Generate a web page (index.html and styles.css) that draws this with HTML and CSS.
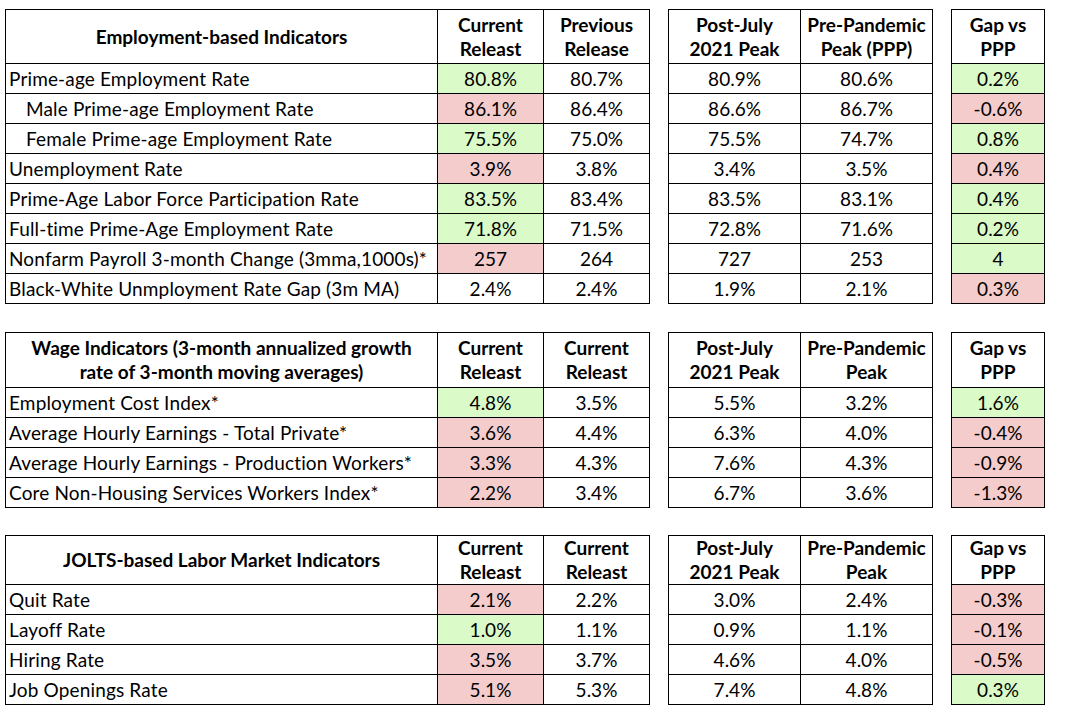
FILE: index.html
```html
<!DOCTYPE html>
<html>
<head>
<meta charset="utf-8">
<link rel="stylesheet" href="styles.css">
</head>
<body>
<div class="page">
  <section class="block">
    <div class="grid grid-a">
      <div class="cell hd h1">Employment-based Indicators</div>
      <div class="cell hd h1">Current<br>Releast</div>
      <div class="cell hd h1">Previous<br>Release</div>
      <div class="cell lbl">Prime-age Employment Rate</div>
      <div class="cell num g">80.8%</div>
      <div class="cell num">80.7%</div>
      <div class="cell lbl ind">Male Prime-age Employment Rate</div>
      <div class="cell num r">86.1%</div>
      <div class="cell num">86.4%</div>
      <div class="cell lbl ind">Female Prime-age Employment Rate</div>
      <div class="cell num g">75.5%</div>
      <div class="cell num">75.0%</div>
      <div class="cell lbl">Unemployment Rate</div>
      <div class="cell num r">3.9%</div>
      <div class="cell num">3.8%</div>
      <div class="cell lbl">Prime-Age Labor Force Participation Rate</div>
      <div class="cell num g">83.5%</div>
      <div class="cell num">83.4%</div>
      <div class="cell lbl">Full-time Prime-Age Employment Rate</div>
      <div class="cell num g">71.8%</div>
      <div class="cell num">71.5%</div>
      <div class="cell lbl">Nonfarm Payroll 3-month Change (3mma,1000s)*</div>
      <div class="cell num r">257</div>
      <div class="cell num">264</div>
      <div class="cell lbl">Black-White Unmployment Rate Gap (3m MA)</div>
      <div class="cell num">2.4%</div>
      <div class="cell num">2.4%</div>
    </div>
    <div class="grid grid-b">
      <div class="cell hd h1">Post-July<br>2021 Peak</div>
      <div class="cell hd h1">Pre-Pandemic<br>Peak (PPP)</div>
      <div class="cell num">80.9%</div><div class="cell num">80.6%</div>
      <div class="cell num">86.6%</div><div class="cell num">86.7%</div>
      <div class="cell num">75.5%</div><div class="cell num">74.7%</div>
      <div class="cell num">3.4%</div><div class="cell num">3.5%</div>
      <div class="cell num">83.5%</div><div class="cell num">83.1%</div>
      <div class="cell num">72.8%</div><div class="cell num">71.6%</div>
      <div class="cell num">727</div><div class="cell num">253</div>
      <div class="cell num">1.9%</div><div class="cell num">2.1%</div>
    </div>
    <div class="grid grid-c">
      <div class="cell hd h1">Gap vs<br>PPP</div>
      <div class="cell num g">0.2%</div>
      <div class="cell num r">-0.6%</div>
      <div class="cell num g">0.8%</div>
      <div class="cell num r">0.4%</div>
      <div class="cell num g">0.4%</div>
      <div class="cell num g">0.2%</div>
      <div class="cell num g">4</div>
      <div class="cell num r">0.3%</div>
    </div>
  </section>

  <section class="block block-2">
    <div class="grid grid-a">
      <div class="cell hd h2">Wage Indicators (3-month annualized growth<br>rate of 3-month moving averages)</div>
      <div class="cell hd h2">Current<br>Releast</div>
      <div class="cell hd h2">Current<br>Releast</div>
      <div class="cell lbl">Employment Cost Index*</div>
      <div class="cell num g">4.8%</div>
      <div class="cell num">3.5%</div>
      <div class="cell lbl">Average Hourly Earnings - Total Private*</div>
      <div class="cell num r">3.6%</div>
      <div class="cell num">4.4%</div>
      <div class="cell lbl">Average Hourly Earnings - Production Workers*</div>
      <div class="cell num r">3.3%</div>
      <div class="cell num">4.3%</div>
      <div class="cell lbl">Core Non-Housing Services Workers Index*</div>
      <div class="cell num r">2.2%</div>
      <div class="cell num">3.4%</div>
    </div>
    <div class="grid grid-b">
      <div class="cell hd h2">Post-July<br>2021 Peak</div>
      <div class="cell hd h2">Pre-Pandemic<br>Peak</div>
      <div class="cell num">5.5%</div><div class="cell num">3.2%</div>
      <div class="cell num">6.3%</div><div class="cell num">4.0%</div>
      <div class="cell num">7.6%</div><div class="cell num">4.3%</div>
      <div class="cell num">6.7%</div><div class="cell num">3.6%</div>
    </div>
    <div class="grid grid-c">
      <div class="cell hd h2">Gap vs<br>PPP</div>
      <div class="cell num g">1.6%</div>
      <div class="cell num r">-0.4%</div>
      <div class="cell num r">-0.9%</div>
      <div class="cell num r">-1.3%</div>
    </div>
  </section>

  <section class="block block-3">
    <div class="grid grid-a">
      <div class="cell hd h3">JOLTS-based Labor Market Indicators</div>
      <div class="cell hd h3">Current<br>Releast</div>
      <div class="cell hd h3">Current<br>Releast</div>
      <div class="cell lbl">Quit Rate</div>
      <div class="cell num r">2.1%</div>
      <div class="cell num">2.2%</div>
      <div class="cell lbl">Layoff Rate</div>
      <div class="cell num g">1.0%</div>
      <div class="cell num">1.1%</div>
      <div class="cell lbl">Hiring Rate</div>
      <div class="cell num r">3.5%</div>
      <div class="cell num">3.7%</div>
      <div class="cell lbl">Job Openings Rate</div>
      <div class="cell num r">5.1%</div>
      <div class="cell num">5.3%</div>
    </div>
    <div class="grid grid-b">
      <div class="cell hd h3">Post-July<br>2021 Peak</div>
      <div class="cell hd h3">Pre-Pandemic<br>Peak</div>
      <div class="cell num">3.0%</div><div class="cell num">2.4%</div>
      <div class="cell num">0.9%</div><div class="cell num">1.1%</div>
      <div class="cell num">4.6%</div><div class="cell num">4.0%</div>
      <div class="cell num">7.4%</div><div class="cell num">4.8%</div>
    </div>
    <div class="grid grid-c">
      <div class="cell hd h3">Gap vs<br>PPP</div>
      <div class="cell num r">-0.3%</div>
      <div class="cell num r">-0.1%</div>
      <div class="cell num r">-0.5%</div>
      <div class="cell num g">0.3%</div>
    </div>
  </section>
</div>
</body>
</html>
```

FILE: styles.css
```css
html, body {
  margin: 0;
  padding: 0;
  background: #ffffff;
}

body {
  font-family: Lato, "Open Sans", "Liberation Sans", sans-serif;
  font-size: 19px;
  color: #000000;
}

.page {
  padding: 9px 0 0 5px;
  display: flex;
  flex-direction: column;
  align-items: flex-start;
}

.block {
  display: flex;
  align-items: flex-start;
  gap: 18px;
}

.block-2 {
  margin-top: 28px;
}

.block-3 {
  margin-top: 27px;
}

.grid {
  display: grid;
  border-top: 1px solid #000;
  border-left: 1px solid #000;
}

.grid-a {
  grid-template-columns: 432px 106px 106px;
}

.grid-b {
  grid-template-columns: 132px 132px;
}

.grid-c {
  grid-template-columns: 93px;
}

.cell {
  box-sizing: border-box;
  height: 30px;
  border-right: 1px solid #000;
  border-bottom: 1px solid #000;
  display: flex;
  align-items: center;
  white-space: nowrap;
  line-height: 24px;
  padding-top: 1px;
}

.hd {
  font-weight: 700;
  justify-content: center;
  text-align: center;
  padding-top: 0;
}

.h1 { height: 54px; }
.h2 { height: 55px; }
.h3 { height: 49px; }

.lbl {
  padding-left: 3px;
  letter-spacing: 0.15px;
}

.lbl.ind {
  padding-left: 20px;
}

.num {
  justify-content: center;
}

.g { background: #dafac8; }
.r { background: #f4cccc; }
```
